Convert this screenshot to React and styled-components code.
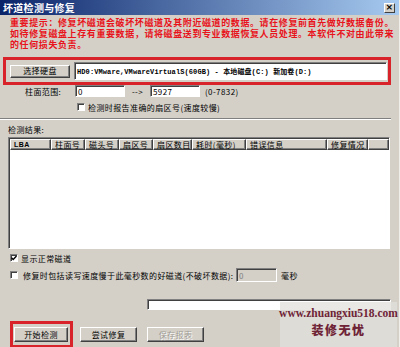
import React from "react";
import styled, { createGlobalStyle } from "styled-components";

const Global = createGlobalStyle`
  html, body { margin: 0; padding: 0; background: #d4d0c8; }
  * { box-sizing: border-box; }
`;

const UI = `"Noto Sans CJK SC", "Liberation Sans", sans-serif`;

const Window = styled.div`
  width: 400px;
  height: 347px;
  background: #d4d0c8;
  position: relative;
  overflow: hidden;
  font-family: ${UI};
  font-size: 8px;
  letter-spacing: 0.4px;
  color: #000;
  display: flex;
  flex-direction: column;
  border-right: 1px solid #f0eee8;
`;

const TitleBar = styled.div`
  height: 15px;
  flex: none;
  background: linear-gradient(to right, #0a246a, #a6caf0);
  display: flex;
  align-items: center;
  justify-content: space-between;
  padding: 0 4px 0 3px;
`;

const Title = styled.span`
  color: #fff;
  font-weight: bold;
  font-size: 10px;
  line-height: 15px;
  letter-spacing: 0.3px;
`;

const CloseBtn = styled.span`
  width: 11px;
  height: 10px;
  background: #d4d0c8;
  border: 1px solid;
  border-color: #fff #404040 #404040 #fff;
  display: flex;
  align-items: center;
  justify-content: center;
  font: bold 9px "DejaVu Sans", sans-serif;
  line-height: 1;
  color: #000;
`;

const Warning = styled.div`
  margin: 2px 0 0 10px;
  color: #e8141c;
  font-size: 9px;
  letter-spacing: 0.6px;
  font-weight: bold;
  white-space: nowrap;
`;

const WarnLine = styled.div`
  height: 11px;
  line-height: 11px;
`;

const Highlight = styled.div`
  margin: 7px 8px 0 3px;
  border: 3px solid #d8232a;
  height: 28px;
  flex: none;
  display: flex;
  align-items: center;
  padding: 0 1px 0 4px;
  gap: 4px;
`;

const Button = styled.button`
  width: ${(p) => p.$w}px;
  height: ${(p) => p.$h || 15}px;
  flex: none;
  background: #d4d0c8;
  border: 1px solid;
  border-color: #fff #404040 #404040 #fff;
  box-shadow: inset -1px -1px #808080;
  font-family: ${UI};
  font-size: 8px;
  letter-spacing: 0.4px;
  line-height: 1;
  padding: 0;
  color: ${(p) => (p.disabled ? "#a09c94" : "#000")};
  text-shadow: ${(p) => (p.disabled ? "1px 1px #fff" : "none")};
`;

const Field = styled.div`
  background: ${(p) => (p.$disabled ? "#d4d0c8" : "#fff")};
  border: 1px solid;
  border-color: #808080 #fff #fff #808080;
  box-shadow: inset 1px 1px #404040;
  width: ${(p) => (p.$w ? p.$w + "px" : "auto")};
  height: ${(p) => p.$h}px;
  flex: ${(p) => (p.$w ? "none" : "1")};
  display: flex;
  align-items: center;
  padding-left: 2px;
  color: ${(p) => (p.$disabled ? "#808080" : "#000")};
  white-space: nowrap;
  overflow: hidden;
`;

const DiskText = styled.span`
  font-family: "Liberation Mono", "Noto Sans CJK SC", monospace;
  font-weight: bold;
  font-size: 7px;
  letter-spacing: 0.1px;
`;

const Row = styled.div`
  display: flex;
  align-items: center;
  flex: none;
  height: ${(p) => p.$h}px;
  margin-top: ${(p) => p.$mt || 0}px;
  padding-left: ${(p) => p.$pl || 0}px;
`;

const Label = styled.span`
  width: ${(p) => (p.$w ? p.$w + "px" : "auto")};
  flex: none;
  white-space: nowrap;
  margin-left: ${(p) => p.$ml || 0}px;
  text-align: ${(p) => p.$align || "left"};
`;

const Box = styled.span`
  width: 8px;
  height: 8px;
  flex: none;
  background: #fff;
  border: 1px solid;
  border-color: #808080 #fff #fff #808080;
  box-shadow: inset 1px 1px #404040;
  display: flex;
  align-items: center;
  justify-content: center;
  margin-right: ${(p) => p.$gap}px;
`;

const Check = ({ checked, gap }) => (
  <Box $gap={gap}>
    {checked && (
      <svg width="6" height="6" viewBox="0 0 6 6">
        <path d="M0.5 2.8 L2.2 4.5 L5.5 1" stroke="#000" strokeWidth="1.4" fill="none" />
      </svg>
    )}
  </Box>
);

const Separator = styled.div`
  margin: 6px 8px 0 0;
  height: 2px;
  flex: none;
  border-top: 1px solid #808080;
  border-bottom: 1px solid #fff;
`;

const ListView = styled.div`
  margin: 3px 9px 0 8px;
  height: 112px;
  flex: none;
  background: #fff;
  border: 1px solid;
  border-color: #808080 #fff #fff #808080;
  box-shadow: inset 1px 1px #404040;
  padding: 1px 0 0 1px;
`;

const Header = styled.div`
  display: flex;
  height: 11px;
  background: #d4d0c8;
`;

const HeadCell = styled.div`
  width: ${(p) => (p.$w ? p.$w + "px" : "auto")};
  flex: ${(p) => (p.$w ? "none" : "1")};
  border: 1px solid;
  border-color: #fff #404040 #404040 #fff;
  box-shadow: inset -1px -1px #808080;
  padding-left: 3px;
  line-height: 9px;
  white-space: nowrap;
  overflow: hidden;
  font-family: ${(p) => (p.$mono ? `"Liberation Sans", sans-serif` : UI)};
  font-weight: ${(p) => (p.$mono ? "bold" : "normal")};
  font-size: ${(p) => (p.$mono ? 7 : 8)}px;
`;

const Progress = styled.div`
  margin: 17px 8px 0 147px;
  height: 11px;
  flex: none;
  background: #fff;
  border: 1px solid;
  border-color: #808080 #fff #fff #808080;
  box-shadow: inset 1px 1px #404040;
`;

const ButtonBar = styled.div`
  display: flex;
  align-items: center;
  flex: none;
  margin-top: 11px;
  padding-left: 10px;
  gap: 10px;
`;

const RedFrame = styled.div`
  border: 3px solid #d8232a;
  padding: 3px 2px 3px 1px;
  margin-right: -3px;
  display: flex;
`;

const Watermark = styled.div`
  position: absolute;
  left: 280px;
  top: 302px;
  width: 117px;
  height: 45px;
  background: rgba(226, 224, 220, 0.75);
  display: flex;
  flex-direction: column;
  align-items: center;
  padding-top: 4px;
  color: #6e2436;
  font-family: "Liberation Serif", "Noto Sans CJK SC", serif;
  font-weight: bold;
  letter-spacing: 0;
`;

const WmUrl = styled.div`
  font-size: 11.5px;
  line-height: 14px;
`;

const WmName = styled.div`
  font-family: "Noto Sans CJK SC", serif;
  font-size: 12px;
  font-weight: 900;
  line-height: 16px;
  letter-spacing: 1.5px;
  margin-top: 2px;
`;

const columns = [
  { t: "LBA", w: 41, mono: true },
  { t: "柱面号", w: 34 },
  { t: "磁头号", w: 34 },
  { t: "扇区号", w: 34 },
  { t: "扇区数目", w: 39 },
  { t: "耗时(毫秒)", w: 54 },
  { t: "错误信息", w: 81 },
  { t: "修复情况", w: 41 },
  { t: "" },
];

export default function App() {
  return (
    <Window>
      <Global />
      <TitleBar>
        <Title>坏道检测与修复</Title>
        <CloseBtn>×</CloseBtn>
      </TitleBar>
      <Warning>
        <WarnLine>重要提示：修复坏磁道会破坏坏磁道及其附近磁道的数据。请在修复前首先做好数据备份。</WarnLine>
        <WarnLine>如待修复磁盘上存有重要数据，请将磁盘送到专业数据恢复人员处理。本软件不对由此带来</WarnLine>
        <WarnLine>的任何损失负责。</WarnLine>
      </Warning>
      <Highlight>
        <Button $w={60} $h={13}>选择硬盘</Button>
        <Field $h={18}>
          <DiskText>HD0:VMware,VMwareVirtualS(60GB) - 本地磁盘(C:) 新加卷(D:)</DiskText>
        </Field>
      </Highlight>
      <Row $h={12} $pl={25}>
        <Label $w={50}>柱面范围:</Label>
        <Field $w={50} $h={12}>0</Field>
        <Label $w={25} $align="center">--&gt;</Label>
        <Field $w={50} $h={12}>5927</Field>
        <Label $ml={5}>(0-7832)</Label>
      </Row>
      <Row $h={10} $mt={5} $pl={77}>
        <Check gap={3} />
        <Label>检测时报告准确的扇区号(速度较慢)</Label>
      </Row>
      <Separator />
      <Row $h={10} $mt={4} $pl={8}>
        <Label>检测结果:</Label>
      </Row>
      <ListView>
        <Header>
          {columns.map((c, i) => (
            <HeadCell key={i} $w={c.w} $mono={c.mono}>
              {c.t}
            </HeadCell>
          ))}
        </Header>
      </ListView>
      <Row $h={10} $mt={4} $pl={10}>
        <Check checked gap={3} />
        <Label>显示正常磁道</Label>
      </Row>
      <Row $h={14} $mt={5} $pl={10}>
        <Check gap={5} />
        <Label $w={213}>修复时包括读写速度慢于此毫秒数的好磁道(不破坏数据):</Label>
        <Field $w={41} $h={14} $disabled>0</Field>
        <Label $ml={4}>毫秒</Label>
      </Row>
      <Progress />
      <ButtonBar>
        <RedFrame>
          <Button $w={54}>开始检测</Button>
        </RedFrame>
        <Button $w={57}>尝试修复</Button>
        <Button $w={57} disabled>保存报表</Button>
      </ButtonBar>
      <Watermark>
        <WmUrl>www.zhuangxiu518.com</WmUrl>
        <WmName>装修无忧</WmName>
      </Watermark>
    </Window>
  );
}
